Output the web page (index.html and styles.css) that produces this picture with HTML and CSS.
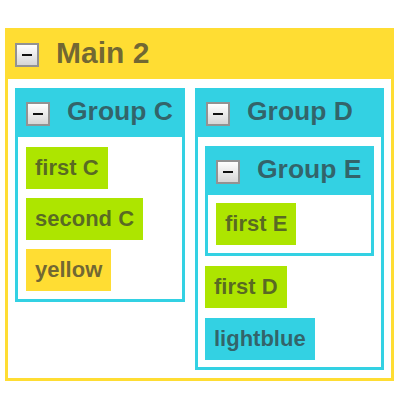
FILE: index.html
```html
<!DOCTYPE html>
<html lang="en">
<head>
    <meta charset="UTF-8">
    <title>Groups</title>
    <link rel="stylesheet" href="styles.css">
</head>
<body>
    <div class="group yellow main">
        <div class="group-head">
            <button class="toggle" aria-label="collapse"></button>
            <span class="title">Main 2</span>
        </div>

        <div class="columns">
            <!-- Group C -->
            <div class="group cyan col-c">
                <div class="group-head">
                    <button class="toggle" aria-label="collapse"></button>
                    <span class="title">Group C</span>
                </div>
                <div class="group-body list">
                    <div class="item green">first C</div>
                    <div class="item green">second C</div>
                    <div class="item yellow-item">yellow</div>
                </div>
            </div>

            <!-- Group D -->
            <div class="group cyan col-d">
                <div class="group-head">
                    <button class="toggle" aria-label="collapse"></button>
                    <span class="title">Group D</span>
                </div>
                <div class="group-body">
                    <div class="group cyan sub">
                        <div class="group-head">
                            <button class="toggle" aria-label="collapse"></button>
                            <span class="title">Group E</span>
                        </div>
                        <div class="group-body list">
                            <div class="item green">first E</div>
                        </div>
                    </div>
                    <div class="item green">first D</div>
                    <div class="item blue-item">lightblue</div>
                </div>
            </div>
        </div>
    </div>
</body>
</html>
```

FILE: styles.css
```css
/* Basic styling */
body {
    margin: 28px 6px 0 5px;
    font-family: "Liberation Sans", Arial, sans-serif;
    font-weight: bold;
    color: rgba(51, 51, 51, 0.7);
}

.group {
    border: 3px solid;
    background: white;
}

.yellow { border-color: #ffdd33; }
.yellow > .group-head { background: #ffdd33; }

.cyan { border-color: #33d1e3; }
.cyan > .group-head { background: #33d1e3; }

.group-head {
    display: flex;
    align-items: center;
    height: 46px;
    padding-left: 8px;
    white-space: nowrap;
}

.main > .group-head {
    height: 48px;
    padding-left: 7px;
}

.toggle {
    width: 24px;
    height: 24px;
    padding: 0;
    border: 2px solid #929292;
    background: linear-gradient(#ffffff, #d6d6d6);
    display: flex;
    align-items: center;
    justify-content: center;
    flex-shrink: 0;
}

.toggle::before {
    content: "";
    width: 10px;
    height: 2px;
    background: #111;
}

.title {
    margin-left: 17px;
    font-size: 26.5px;
    margin-top: -5px;
}

.main > .group-head .title {
    font-size: 30px;
    margin-top: -4px;
}

.columns {
    display: flex;
    align-items: flex-start;
    gap: 10px;
    padding: 9px 7px 8px;
}

.col-c { width: 170px; box-sizing: border-box; }
.col-d { flex: 1; min-width: 0; }

.group-body {
    display: flex;
    flex-direction: column;
    align-items: flex-start;
    gap: 10px;
    padding: 9px 7px 7px;
}

.group-body.list {
    gap: 9px;
    padding: 10px 8px 8px;
}

.sub { align-self: stretch; }
.sub > .group-body { padding-top: 8px; }

.item {
    font-size: 22px;
    line-height: 26px;
    padding: 8px 9px;
    white-space: nowrap;
}

.green { background: #ade500; }
.yellow-item { background: #ffdd33; }
.blue-item { background: #33d1e3; }
```
